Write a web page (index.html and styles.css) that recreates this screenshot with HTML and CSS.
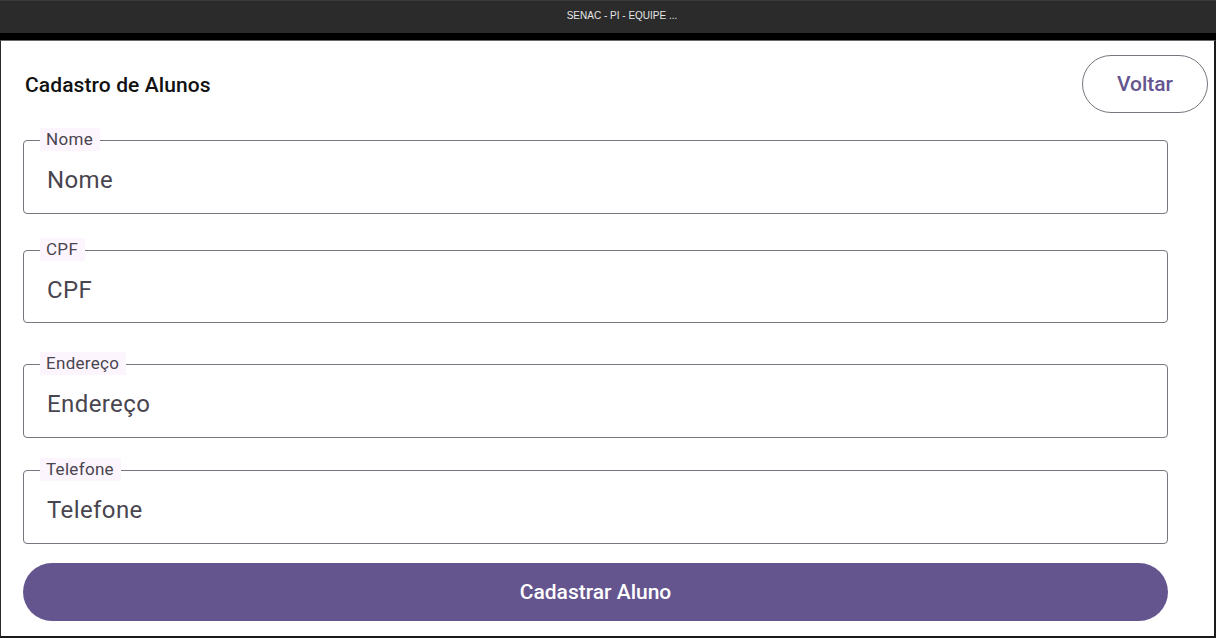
FILE: index.html
```html
<!DOCTYPE html>
<html lang="pt-BR">
<head>
<meta charset="utf-8">
<title>SENAC - PI - EQUIPE ...</title>
<link rel="stylesheet" href="styles.css">
</head>
<body>
<div class="window">
  <div class="titlebar"><span class="titlebar-text">SENAC - PI - EQUIPE ...</span></div>
  <div class="strip"></div>
  <main class="screen">
    <header class="header">
      <h1 class="title">Cadastro de Alunos</h1>
      <button class="btn-outline" type="button">Voltar</button>
    </header>
    <form class="form">
      <div class="field field-1">
        <span class="field-label">Nome</span>
        <span class="field-value">Nome</span>
      </div>
      <div class="field field-2">
        <span class="field-label">CPF</span>
        <span class="field-value">CPF</span>
      </div>
      <div class="field field-3">
        <span class="field-label">Endereço</span>
        <span class="field-value">Endereço</span>
      </div>
      <div class="field field-4">
        <span class="field-label">Telefone</span>
        <span class="field-value">Telefone</span>
      </div>
      <button class="btn-primary" type="button">Cadastrar Aluno</button>
    </form>
  </main>
</div>
</body>
</html>
```

FILE: styles.css
```css
* { box-sizing: border-box; }

html, body {
  margin: 0;
  padding: 0;
  width: 1216px;
  height: 638px;
  overflow: hidden;
  background: #1c1c1c;
  font-family: Roboto, "Noto Sans", sans-serif;
}

.window {
  width: 1216px;
  height: 638px;
  display: flex;
  flex-direction: column;
}

.titlebar {
  height: 33px;
  flex: 0 0 33px;
  background: #2b2b2b;
  border-top: 1px solid #3a3a3a;
  display: flex;
  align-items: center;
  justify-content: center;
  padding-left: 28px;
}

.titlebar-text {
  font-family: "Liberation Sans", Arial, sans-serif;
  font-size: 10px;
  color: #e6e6e6;
  margin-top: -3px;
}

.strip {
  height: 7px;
  flex: 0 0 7px;
  background: #000;
}

.screen {
  flex: 1;
  background: #fff;
  border-top: 1px solid #6a6a6a;
  border-left: 1px solid #2a2a2a;
  border-right: 2px solid #1a1a1a;
  border-bottom: 2px solid #1a1a1a;
  padding: 14px 6px 0 22px;
  display: flex;
  flex-direction: column;
}

.header {
  height: 58px;
  display: flex;
  align-items: center;
  justify-content: space-between;
}

.title {
  margin: 2px 0 0 2px;
  font-size: 21px;
  font-weight: 500;
  color: #111;
  letter-spacing: 0.1px;
}

.btn-outline {
  width: 126px;
  height: 58px;
  border: 1px solid #79747e;
  border-radius: 29px;
  background: #fff;
  color: #65558f;
  font-family: Roboto, sans-serif;
  font-size: 21px;
  font-weight: 500;
  padding: 0 0 1px 0;
}

.form {
  width: 1145px;
  display: flex;
  flex-direction: column;
}

.field {
  position: relative;
  height: 74px;
  border: 1px solid #79747e;
  border-radius: 4px;
  display: flex;
  align-items: center;
  padding: 6px 0 0 23px;
}

.field-1 { margin-top: 27px; }
.field-2 { margin-top: 36px; height: 73px; }
.field-3 { margin-top: 41px; }
.field-4 { margin-top: 32px; }

.field-label {
  position: absolute;
  left: 16px;
  top: -13px;
  height: 23px;
  line-height: 23px;
  padding: 0 7px 0 6px;
  background: #fdf5fd;
  color: #49454f;
  font-size: 17px;
  letter-spacing: 0.3px;
}

.field-value {
  color: #49454f;
  font-size: 24px;
  letter-spacing: 0.4px;
}

.btn-primary {
  margin-top: 19px;
  height: 58px;
  width: 1145px;
  border: none;
  border-radius: 29px;
  background: #65558f;
  color: #fff;
  font-family: Roboto, sans-serif;
  font-size: 21px;
  font-weight: 500;
  padding: 0;
}
```
